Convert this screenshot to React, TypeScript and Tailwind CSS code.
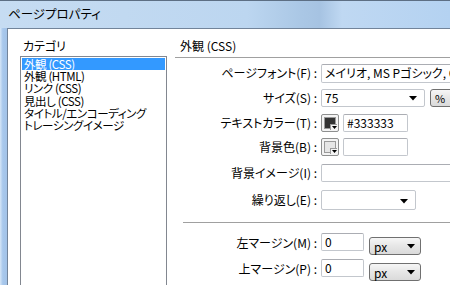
import React from 'react';

const font = "[font-family:'Noto_Sans_CJK_JP','Noto_Sans',sans-serif] [font-feature-settings:'palt']";

const Arrow: React.FC<{ className?: string }> = ({ className = '' }) => (
  <svg width="8" height="5" viewBox="0 0 8 5" className={`shrink-0 ${className}`}>
    <path d="M0 0 H8 L4 4.5 Z" fill="#000" />
  </svg>
);

const Label: React.FC<{ text: string }> = ({ text }) => (
  <div className="w-[142px] shrink-0 text-right text-[12px] leading-[22px] text-black whitespace-nowrap">{text}</div>
);

const TextBox: React.FC<{ value?: string; className?: string }> = ({ value = '', className = '' }) => (
  <div className={`shrink-0 h-[18px] border border-[#c3c7cd] border-t-[#abadb3] rounded-[2px] bg-white px-[3px] text-[12px] leading-[15px] text-black whitespace-nowrap overflow-hidden ${className}`}>
    {value}
  </div>
);

const Swatch: React.FC<{ fill: string }> = ({ fill }) => (
  <div className="relative shrink-0 w-[18px] h-[18px] border border-[#8e8f8f] rounded-[2px] bg-[#f4f4f4] p-[2px]">
    <div className="w-full h-full border border-[#9a9a9a]" style={{ backgroundColor: fill }} />
    <div className="absolute right-[1px] bottom-[1px] w-[7px] h-[6px] bg-[#f4f4f4] border-l border-t border-[#9a9a9a] flex items-end justify-center pb-[1px]">
      <svg width="5" height="3" viewBox="0 0 5 3"><path d="M0 0 H5 L2.5 3 Z" fill="#000" /></svg>
    </div>
  </div>
);

const ButtonSelect: React.FC<{ text: string; className?: string }> = ({ text, className = '' }) => (
  <div className={`shrink-0 h-[18px] border border-[#707070] rounded-[3px] bg-[linear-gradient(#f6f6f6,#e6e6e6_50%,#dadada)] flex items-center pl-[4px] pr-[5px] text-[12px] text-black ${className}`}>
    <span className="flex-1 leading-[14px] pt-[2px]">{text}</span>
    <Arrow />
  </div>
);

const categories = ['外観 (CSS)', '外観 (HTML)', 'リンク (CSS)', '見出し (CSS)', 'タイトル/エンコーディング', 'トレーシングイメージ'];

export default function App() {
  return (
    <div className={`w-[450px] h-[285px] overflow-hidden flex flex-col bg-[#b6d1ee] ${font}`}>
      {/* title bar */}
      <div className="h-[28px] shrink-0 border-t border-[#5d6f84] bg-[linear-gradient(90deg,#c6dcf2_0%,#bcd6f0_55%,#aac7e5_67%,#a6c3e2_71%,#bfd8f2_76%,#b4d2f1_100%)] flex items-center pl-[8px]">
        <span className="text-[12.5px] text-black leading-[16px] pb-[1px]">ページプロパティ</span>
      </div>

      <div className="flex flex-1 min-h-0">
        <div className="w-[7px] shrink-0 bg-[linear-gradient(90deg,#d6e6f7,#a8c8ec_40%,#a3c3e8)]" />
        <div className="flex flex-1 min-w-0 bg-white border-l border-t border-[#72849a] overflow-hidden">
          {/* left pane */}
          <div className="w-[159px] shrink-0 pl-[12px] pt-[9px]">
            <div className="pl-[3px] text-[12px] leading-[16px] text-black mb-[2px]">カテゴリ</div>
            <div className="w-[147px] h-[240px] border border-[#828790] p-[1px]">
              {categories.map((c, i) => (
                <div
                  key={c}
                  className={`pl-[2px] text-[11.5px] tracking-[-0.4px] leading-[12.2px] h-[12.2px] whitespace-nowrap ${i === 0 ? 'bg-[#3399ff] text-white' : 'text-black'}`}
                >
                  {c}
                </div>
              ))}
            </div>
          </div>

          {/* right pane */}
          <div className="flex-1 min-w-0 ml-[8px] pt-[9px] flex flex-col">
            <div className="h-[20px] border-b border-[#a0a0a0] pl-[5px] text-[12px] leading-[16px] text-black">外観 (CSS)</div>

            <div className="mt-[4px] h-[22px] flex items-center">
              <Label text="ページフォント(F) :" />
              <TextBox value="メイリオ, MS Pゴシック, Osaka, sans-serif" className="ml-[4px] w-[200px] h-[19px]" />
            </div>

            <div className="mt-[3px] h-[22px] flex items-center">
              <Label text="サイズ(S) :" />
              <div className="shrink-0 ml-[4px] w-[104px] h-[18px] border border-[#c3c7cd] rounded-[2px] bg-white flex items-center pl-[3px] pr-[7px] text-[12px] text-black">
                <span className="flex-1 leading-[14px]">75</span>
                <Arrow />
              </div>
              <div className="shrink-0 ml-[5px] w-[50px] h-[18px] border border-[#707070] rounded-[3px] bg-[linear-gradient(#f6f6f6,#e6e6e6_50%,#dadada)] pl-[4px] text-[11px] leading-[16px] text-black">%</div>
            </div>

            <div className="mt-[3px] h-[22px] flex items-center">
              <Label text="テキストカラー(T) :" />
              <div className="ml-[4px]"><Swatch fill="#333333" /></div>
              <TextBox value="#333333" className="ml-[4px] w-[65px]" />
            </div>

            <div className="mt-[2px] h-[22px] flex items-center">
              <Label text="背景色(B) :" />
              <div className="ml-[4px]"><Swatch fill="#e6e6e6" /></div>
              <TextBox className="ml-[4px] w-[65px]" />
            </div>

            <div className="mt-[4px] h-[22px] flex items-center">
              <Label text="背景イメージ(I) :" />
              <TextBox className="ml-[4px] w-[160px]" />
            </div>

            <div className="mt-[5px] h-[22px] flex items-center">
              <Label text="繰り返し(E) :" />
              <div className="shrink-0 ml-[4px] w-[95px] h-[20px] border border-[#c3c7cd] rounded-[2px] bg-white flex items-center justify-end pr-[7px]">
                <Arrow className="mt-[3px]" />
              </div>
            </div>

            <div className="mt-[11px] ml-[8px] border-t border-[#a0a0a0]" />

            <div className="mt-[9px] h-[23px] flex items-start">
              <Label text="左マージン(M) :" />
              <TextBox value="0" className="ml-[4px] mt-[1px] w-[43px] h-[17px]" />
              <ButtonSelect text="px" className="ml-[5px] mt-[5px] w-[52px]" />
            </div>

            <div className="mt-[3px] h-[23px] flex items-start">
              <Label text="上マージン(P) :" />
              <TextBox value="0" className="ml-[4px] mt-[1px] w-[43px] h-[17px]" />
              <ButtonSelect text="px" className="ml-[5px] mt-[5px] w-[52px]" />
            </div>
          </div>
        </div>
      </div>
    </div>
  );
}
